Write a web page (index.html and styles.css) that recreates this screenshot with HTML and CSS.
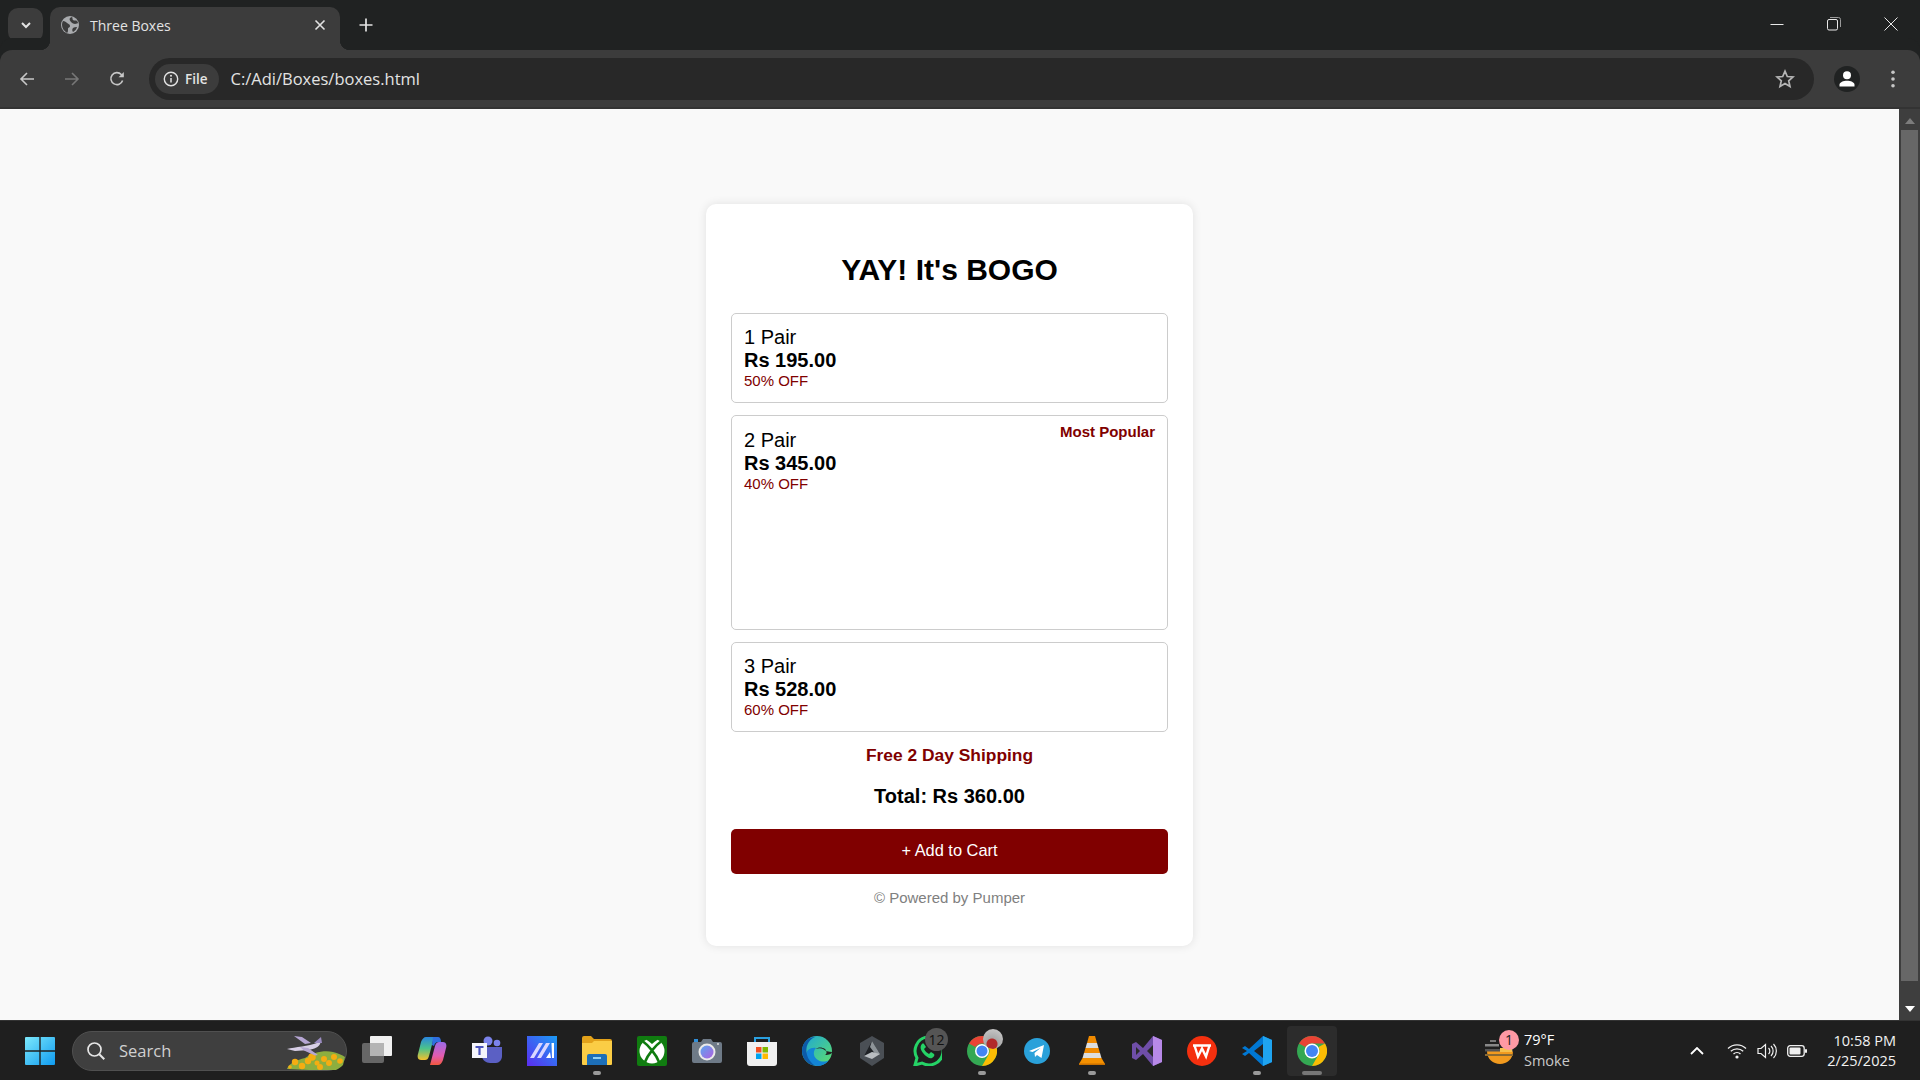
FILE: index.html
```html
<!DOCTYPE html>
<html lang="en">
<head>
<meta charset="utf-8">
<title>Three Boxes</title>
<link rel="stylesheet" href="styles.css">
</head>
<body>
<div class="screen">
  <header class="tabstrip">
    <div class="tab-expander">
      <svg width="14" height="14" viewBox="0 0 14 14"><path d="M3 5l4 4 4-4" fill="none" stroke="#e3e3e3" stroke-width="2"/></svg>
    </div>
    <div class="tab">
      <svg class="tab-favicon" width="18" height="18" viewBox="0 0 18 18"><circle cx="9" cy="9" r="9" fill="#a9abae"/><path d="M2 5c2 0 3 1 4 2s3 1 3 3-2 1-2 3 0 3-1 4C3 15 1 12 1 9c0-1.500.400-3 1-4zM11 1c1 1 0 2 1 3s3 0 4 1 1 2 1 2-2 1-3 1-3-1-4-2-2-3-1-4 2-1 2-1zM12 12c1-1 3-1 4-1-.500 2-2 4-4 5-1-1-1-3 0-4z" fill="#3c3c3c"/></svg>
      <span class="tab-title">Three Boxes</span>
      <svg class="tab-close" width="12" height="12" viewBox="0 0 12 12"><path d="M1.500 1.500l9 9M10.500 1.500l-9 9" stroke="#e3e3e3" stroke-width="1.600"/></svg>
    </div>
    <svg class="new-tab" width="14" height="14" viewBox="0 0 14 14"><path d="M7 0.500v13M0.500 7h13" stroke="#e3e3e3" stroke-width="1.700"/></svg>
    <div class="window-controls">
      <svg width="14" height="14" viewBox="0 0 14 14"><path d="M0.500 7.500h13" stroke="#e8e8e8" stroke-width="1"/></svg>
      <svg width="14" height="14" viewBox="0 0 14 14"><rect x="0.500" y="2.500" width="10" height="10.500" rx="1.500" fill="none" stroke="#e8e8e8"/><path d="M3 .5h8.500a2 2 0 0 1 2 2V10" fill="none" stroke="#9a9a9a"/></svg>
      <svg width="14" height="14" viewBox="0 0 14 14"><path d="M0.500 0.500l13 13M13.500 0.500l-13 13" stroke="#e8e8e8" stroke-width="1"/></svg>
    </div>
  </header>

  <nav class="toolbar">
    <div class="nav-buttons">
      <svg width="16" height="16" viewBox="0 0 16 16"><path d="M15 8H2M8 2L2 8l6 6" fill="none" stroke="#c7c7c7" stroke-width="1.600"/></svg>
      <svg width="16" height="16" viewBox="0 0 16 16"><path d="M1 8h13M8 2l6 6-6 6" fill="none" stroke="#777" stroke-width="1.600"/></svg>
      <svg width="16" height="16" viewBox="0 0 16 16"><path d="M13.600 9.500A6 6 0 1 1 12.300 3.500L14 5" fill="none" stroke="#c7c7c7" stroke-width="1.600"/><path d="M14.800 1v5.200H9.600z" fill="#c7c7c7"/></svg>
    </div>
    <div class="omnibox">
      <div class="chip">
        <svg width="16" height="16" viewBox="0 0 16 16"><circle cx="8" cy="8" r="6.700" fill="none" stroke="#e3e3e3" stroke-width="1.400"/><path d="M8 7v4.500" stroke="#e3e3e3" stroke-width="1.500"/><circle cx="8" cy="4.800" r="1" fill="#e3e3e3"/></svg>
        <span>File</span>
      </div>
      <span class="url">C:/Adi/Boxes/boxes.html</span>
      <svg class="star" width="20" height="20" viewBox="0 0 20 20"><path d="M10 2.200l2.300 5.300 5.700.500-4.300 3.800 1.300 5.700L10 14.500l-5 3 1.300-5.700L2 8l5.700-.500z" fill="none" stroke="#b5b5b5" stroke-width="1.700"/></svg>
    </div>
    <div class="toolbar-end">
      <div class="avatar">
        <svg width="20" height="20" viewBox="0 0 20 20"><circle cx="10" cy="6.200" r="4" fill="#fff"/><path d="M2.500 17.500v-1.800c0-2.500 4-4 7.500-4s7.500 1.500 7.500 4v1.800z" fill="#fff"/></svg>
      </div>
      <svg class="menu" width="4" height="18" viewBox="0 0 4 18"><circle cx="2" cy="2.300" r="1.800" fill="#c7c7c7"/><circle cx="2" cy="9" r="1.800" fill="#c7c7c7"/><circle cx="2" cy="15.700" r="1.800" fill="#c7c7c7"/></svg>
    </div>
  </nav>

  <div class="viewport">
    <main class="page">
      <section class="card">
        <h1 class="card-title">YAY! It's BOGO</h1>
        <div class="option">
          <div class="option-qty">1 Pair</div>
          <div class="option-price">Rs 195.00</div>
          <div class="option-off">50% OFF</div>
        </div>
        <div class="option option-tall">
          <span class="badge">Most Popular</span>
          <div class="option-qty">2 Pair</div>
          <div class="option-price">Rs 345.00</div>
          <div class="option-off">40% OFF</div>
        </div>
        <div class="option">
          <div class="option-qty">3 Pair</div>
          <div class="option-price">Rs 528.00</div>
          <div class="option-off">60% OFF</div>
        </div>
        <p class="shipping">Free 2 Day Shipping</p>
        <p class="total">Total: Rs 360.00</p>
        <button class="add-btn" type="button">+ Add to Cart</button>
        <p class="powered">© Powered by Pumper</p>
      </section>
    </main>
    <div class="scrollbar">
      <svg class="scroll-arrow" width="10" height="6" viewBox="0 0 10 6"><path d="M5 0l5 6H0z" fill="#7c7c7c"/></svg>
      <div class="scroll-thumb"></div>
      <svg class="scroll-arrow" width="10" height="6" viewBox="0 0 10 6"><path d="M0 0h10L5 6z" fill="#fff"/></svg>
    </div>
  </div>

  <footer class="taskbar">
    <div class="task-start">
      <svg width="30" height="30" viewBox="0 0 30 30"><defs><linearGradient id="win" x1="0" y1="0" x2="1" y2="1"><stop offset="0" stop-color="#7ce8fb"/><stop offset="1" stop-color="#0f9bf0"/></linearGradient></defs><path d="M1 1h13.300v13.300H0V2a1 1 0 0 1 1-1zM15.700 1H29a1 1 0 0 1 1 1v12.300H15.700zM0 15.700h14.300V29H1a1 1 0 0 1-1-1zM15.700 15.700H30V28a1 1 0 0 1-1 1H15.700z" fill="url(#win)"/></svg>
    </div>
    <div class="task-search">
      <svg width="20" height="20" viewBox="0 0 20 20"><circle cx="8.500" cy="8.500" r="6.500" fill="none" stroke="#e6e6e6" stroke-width="1.700"/><path d="M13.300 13.300l5 5" stroke="#e6e6e6" stroke-width="2"/></svg>
      <span class="search-label">Search</span>
      <svg class="search-art" width="60" height="34" viewBox="0 0 60 34">
        <path d="M1 33c2-6 10-9 18-11 8-5 18-8 28-6 5 1 9 3 12 5l-2 8c-3 3-7 6-12 6z" fill="#8dae3f"/>
        <g fill="#f5ad12"><circle cx="9" cy="26" r="3.200"/><circle cx="16" cy="30" r="3.200"/><circle cx="22" cy="25" r="3.200"/><circle cx="26" cy="21" r="3.800"/><circle cx="31" cy="27" r="2.500"/><circle cx="38" cy="23" r="3"/><circle cx="34" cy="31" r="3"/><circle cx="43" cy="27" r="3"/><circle cx="48" cy="21" r="3"/><circle cx="54" cy="25" r="2.800"/><circle cx="4" cy="31" r="1.800"/></g>
        <path d="M1 13c8-2 22-3 30-6 3-1 4-1 3 1-1 3-6 5-11 6l-14 1z" fill="#d8cfe6"/>
        <path d="M8 0l8 1 9 6-6 1zM14 11l8 1 10 7-3 .5-11-5z" fill="#b6a6d4"/><path d="M28 7l7-6 1 6z" fill="#9b8cc0"/>
      </svg>
    </div>
    <div class="task-apps">
      <div class="app"><svg width="30" height="30" viewBox="0 0 30 30"><rect y="7" width="22" height="20" rx="2" fill="#666"/><rect x="8" width="22" height="20" rx="1" fill="#f0f0f0"/><rect x="8" y="7" width="14" height="13" fill="#b4b4b4"/></svg></div>
      <div class="app"><svg width="30" height="30" viewBox="0 0 30 30"><defs><linearGradient id="cp1" x1="0" y1="0" x2="0" y2="1"><stop offset="0" stop-color="#2a86e0"/><stop offset=".5" stop-color="#4cc38a"/><stop offset="1" stop-color="#f5c02c"/></linearGradient><linearGradient id="cp2" x1="0" y1="0" x2="0" y2="1"><stop offset="0" stop-color="#9a6be8"/><stop offset=".6" stop-color="#e25bb0"/><stop offset="1" stop-color="#f2583e"/></linearGradient></defs><path d="M9 1h8l-5 19c-1 3-2 4-4 4H4c-3 0-4-3-3-6l3-12c1-3 3-5 5-5z" fill="url(#cp1)"/><path d="M21 29h-8l5-19c1-3 2-4 4-4h4c3 0 4 3 3 6l-3 12c-1 3-3 5-5 5z" fill="url(#cp2)"/><path d="M16 1h5c2 0 3 2 3 5h-3c-2 0-3 1-4 4l-2-1z" fill="#2f6fe0"/></svg></div>
      <div class="app"><svg width="30" height="30" viewBox="0 0 30 30"><circle cx="25" cy="7" r="3.300" fill="#7b83eb"/><circle cx="16" cy="5" r="4.500" fill="#7b83eb"/><path d="M10 11h20v9c0 4-3 7-6 7h-6c-4 0-8-3-8-7z" fill="#5b60c4"/><rect y="7" width="15" height="15" fill="#f5f5fb"/><path d="M3.500 10h8v2H8.600v7H6.400v-7H3.500z" fill="#4b53bc"/></svg></div>
      <div class="app"><svg width="30" height="30" viewBox="0 0 30 30"><defs><linearGradient id="ma" x1="1" y1="0" x2="0" y2="1"><stop offset="0" stop-color="#1a9cf5"/><stop offset="1" stop-color="#5b2cf0"/></linearGradient></defs><rect width="30" height="30" fill="url(#ma)"/><path d="M3 22L12 7h4L7 22zM10 22L19 7h4l-9 15z" fill="#d9d6ff"/><path d="M19 22l4-6 1 6zM24.500 7H27v15h-2z" fill="#fff"/></svg></div>
      <div class="app dotted"><svg width="30" height="30" viewBox="0 0 30 30"><path d="M0 2a2 2 0 0 1 2-2h7l3 3h16a2 2 0 0 1 2 2v4H0z" fill="#e3a21a"/><path d="M0 7l10 0 2-2h18v23a1 1 0 0 1-1 1H1a1 1 0 0 1-1-1z" fill="#fbcd45"/><path d="M5 20a2 2 0 0 1 2-2h16a2 2 0 0 1 2 2v9H5z" fill="#1d6fb8"/><rect x="11" y="21" width="8" height="2" fill="#8fd0f5"/></svg></div>
      <div class="app"><svg width="30" height="30" viewBox="0 0 30 30"><rect width="30" height="30" rx="2" fill="#107c10"/><circle cx="15" cy="15" r="12.500" fill="#fff"/><path d="M6 5.500C11 9 19 18 22 26M24 5.500C19 9 11 18 8 26" fill="none" stroke="#107c10" stroke-width="2.600"/><path d="M9 3.600c2 1 4 2.500 6 4.500 2-2 4-3.500 6-4.500l-2-2h-8z" fill="#107c10"/></svg></div>
      <div class="app"><svg width="30" height="30" viewBox="0 0 30 30"><path d="M2 6h7l2-3h8l2 3h7a2 2 0 0 1 2 2v17a2 2 0 0 1-2 2H2a2 2 0 0 1-2-2V8a2 2 0 0 1 2-2z" fill="#6e7a87"/><rect x="2" y="3" width="4" height="3" fill="#2f8ed8"/><circle cx="15" cy="16" r="8.500" fill="#eaeaea"/><defs><linearGradient id="cam" x1="0" y1="0" x2="1" y2="1"><stop offset="0" stop-color="#5aa7ef"/><stop offset="1" stop-color="#b05fe0"/></linearGradient></defs><circle cx="15" cy="16" r="6.500" fill="url(#cam)"/><circle cx="26" cy="8" r="1" fill="#ddd"/></svg></div>
      <div class="app"><svg width="30" height="30" viewBox="0 0 30 30"><path d="M8 6V2h14v4" fill="none" stroke="#2aa0e0" stroke-width="2"/><path d="M0 6h30v21a3 3 0 0 1-3 3H3a3 3 0 0 1-3-3z" fill="#f0f0f0"/><rect x="9" y="11" width="5.500" height="5.500" fill="#f25022"/><rect x="15.500" y="11" width="5.500" height="5.500" fill="#7fba00"/><rect x="9" y="17.500" width="5.500" height="5.500" fill="#00a4ef"/><rect x="15.500" y="17.500" width="5.500" height="5.500" fill="#ffb900"/></svg></div>
      <div class="app"><svg width="30" height="30" viewBox="0 0 30 30"><defs><linearGradient id="edge" x1="0" y1="0" x2="1" y2="1"><stop offset="0" stop-color="#1ca5d8"/><stop offset="1" stop-color="#5fe06a"/></linearGradient></defs><circle cx="15" cy="15" r="15" fill="url(#edge)"/><path d="M14 12c-5-1-10 2-10 7 0 5 5 10 11 11 5 0 9-2 12-6-3 2-8 2-11 0-4-2-6-8-2-12z" fill="#1384d6"/><path d="M0 15C0 7 6 1 13 1 6 4 3 11 5 19c1 4 4 8 8 10.800C6 29 0 23 0 15z" fill="#0d5aa8"/><path d="M14 13c2-2 6-2 9 0 2 2 2 5 0 6 4 0 7-1 7-3-3 0-7-1-9-3-2-1-5-1-7 0z" fill="#232323"/></svg></div>
      <div class="app"><svg width="30" height="30" viewBox="0 0 30 30"><path d="M15 0l12 7v15l-12 8-12-8V7z" fill="#4a4f55"/><path d="M15 5l8 13-8-2-8 4z" fill="#1f2226"/><path d="M15 5l8 13-4 1-6-8z" fill="#8e9499"/><path d="M7 20l8-4 8 2-8 5z" fill="#b9bdc1"/></svg></div>
      <div class="app"><svg width="30" height="30" viewBox="0 0 30 30"><path d="M3 29l2-7A14 14 0 1 1 10 27z" fill="none" stroke="#25d366" stroke-width="3"/><path d="M10 8c-2 2-2 5 1 9s7 6 9 5 3-3 2-4l-3-2-2 2c-2-1-4-3-5-5l2-2-2-3c-1-1-1-1-2 0z" fill="#25d366"/></svg><span class="app-badge">12</span></div>
      <div class="app dotted"><svg width="30" height="30" viewBox="0 0 30 30"><circle cx="15" cy="15" r="15" fill="#34a853"/><path d="M15 0a15 15 0 0 1 13 7.500H15A7.500 7.500 0 0 0 8.500 11L2 7.500A15 15 0 0 1 15 0z" fill="#ea4335"/><path d="M28 7.500A15 15 0 0 1 15 30l6.500-11.300A7.500 7.500 0 0 0 21.500 11z" fill="#fbbc04"/><circle cx="15" cy="15" r="7" fill="#fff"/><circle cx="15" cy="15" r="5.500" fill="#4285f4"/></svg><span class="app-photo"></span></div>
      <div class="app"><svg width="26" height="26" viewBox="0 0 26 26"><circle cx="13" cy="13" r="13" fill="#2aa1da"/><path d="M5 13l15-6-2.500 13-4.500-3-2 2-.500-4 6-5-8 4z" fill="#fff"/></svg></div>
      <div class="app dotted"><svg width="26" height="30" viewBox="0 0 26 30"><path d="M10 0h6l2 7H8z" fill="#f08a00"/><path d="M8 7h10l1.500 5h-13z" fill="#ddd"/><path d="M6.500 12h13l1.500 5H5z" fill="#f08a00"/><path d="M5 17h16l1.500 5h-19z" fill="#ddd"/><path d="M3.500 22h19l3.500 6H0z" fill="#f49000"/><rect y="27.500" width="26" height="1.500" fill="#c86f00"/></svg></div>
      <div class="app"><svg width="30" height="30" viewBox="0 0 30 30"><path d="M0 8l4-2 7 6L21 0l9 4v22l-9 4-10-12-7 6-4-2z" fill="#6f4ea8"/><path d="M21 0l9 4v22l-9 4z" fill="#b889e8"/><path d="M4 11v8l4-4z" fill="#2a2a2a"/><path d="M21 9v12l-6-6z" fill="#2a2a2a"/></svg></div>
      <div class="app"><svg width="30" height="30" viewBox="0 0 30 30"><circle cx="15" cy="15" r="15" fill="#f4300f"/><path d="M6 9.500h18M7.500 9.500l3.500 11 4-8 4 8 3.500-11" fill="none" stroke="#fff" stroke-width="2.400"/></svg></div>
      <div class="app dotted"><svg width="30" height="30" viewBox="0 0 30 30"><path d="M21 0l9 4v22l-9 4L7 17l-4 3-3-2 5-3-5-3 3-2 4 3z" fill="#0078d4"/><path d="M21 0l9 4v22l-9 4z" fill="#1fa4f0"/><path d="M21 8v14l-9-7z" fill="#232323"/></svg></div>
      <div class="app app-active"><svg width="30" height="30" viewBox="0 0 30 30"><circle cx="15" cy="15" r="15" fill="#34a853"/><path d="M15 0a15 15 0 0 1 13 7.500H15A7.500 7.500 0 0 0 8.500 11L2 7.500A15 15 0 0 1 15 0z" fill="#ea4335"/><path d="M28 7.500A15 15 0 0 1 15 30l6.500-11.300A7.500 7.500 0 0 0 21.500 11z" fill="#fbbc04"/><circle cx="15" cy="15" r="7.500" fill="#fff"/><circle cx="15" cy="15" r="6" fill="#4285f4"/></svg></div>
    </div>
    <div class="tray">
      <div class="weather">
        <svg width="30" height="30" viewBox="0 0 30 30"><path d="M2 15h26c0 8-6 13-13 13S2 23 2 15z" fill="#f29a1e"/><rect x="5" y="4" width="6" height="2" fill="#777"/><rect x="0" y="8" width="14" height="2.500" fill="#888"/><rect x="0" y="13" width="28" height="2.500" fill="#555"/><rect x="15" y="12" width="12" height="4" fill="#f6c04c"/><rect x="0" y="18" width="28" height="2" fill="#8a6a33"/></svg>
        <span class="weather-badge">1</span>
        <div class="weather-text">
          <span class="weather-temp">79°F</span>
          <span class="weather-desc">Smoke</span>
        </div>
      </div>
      <svg class="tray-chevron" width="14" height="8" viewBox="0 0 14 8"><path d="M1 7l6-6 6 6" fill="none" stroke="#fff" stroke-width="1.800"/></svg>
      <div class="tray-icons">
        <svg width="20" height="16" viewBox="0 0 20 16"><path d="M1 5.500a13 13 0 0 1 18 0M3.800 8.300a9 9 0 0 1 12.400 0M6.500 11a5 5 0 0 1 7 0" fill="none" stroke="#f0f0f0" stroke-width="1.300"/><circle cx="10" cy="14" r="1.600" fill="#f0f0f0"/></svg>
        <svg width="20" height="16" viewBox="0 0 20 16"><path d="M1 5.500h3L8.500 1.500v13L4 10.500H1z" fill="none" stroke="#f0f0f0" stroke-width="1.200"/><path d="M11.500 5a4 4 0 0 1 0 6M14 3a7 7 0 0 1 0 10M16.500 1a10 10 0 0 1 0 14" fill="none" stroke="#f0f0f0" stroke-width="1.200"/></svg>
        <svg width="20" height="12" viewBox="0 0 20 12"><rect x="0.700" y="0.700" width="16.500" height="10.600" rx="2.500" fill="none" stroke="#f0f0f0" stroke-width="1.300"/><rect x="2.500" y="2.500" width="11" height="7" rx="1" fill="#f0f0f0"/><rect x="18" y="4" width="2" height="4" rx="1" fill="#f0f0f0"/></svg>
      </div>
      <div class="clock">
        <span>10:58 PM</span>
        <span>2/25/2025</span>
      </div>
    </div>
  </footer>
</div>
</body>
</html>
```

FILE: styles.css
```css
* { box-sizing: border-box; }

html, body { margin: 0; height: 100%; overflow: hidden; }

body { font-family: "Liberation Sans", Arial, sans-serif; background: #1f1f1f; }

.screen { display: flex; flex-direction: column; width: 1920px; height: 1080px; }

/* tab strip */
.tabstrip {
  display: flex;
  align-items: flex-end;
  height: 50px;
  padding-left: 8px;
  background: #202222;
  flex: none;
}

.tab-expander {
  display: flex;
  align-items: center;
  justify-content: center;
  align-self: flex-start;
  width: 35px;
  height: 34px;
  margin-top: 8px;
  border-radius: 10px;
  background: #3c3c3c;
}

.tab {
  position: relative;
  display: flex;
  align-items: center;
  width: 290px;
  height: 43px;
  margin-left: 7px;
  padding: 0 11px 7px 11px;
  border-radius: 10px 10px 0 0;
  background: #3c3c3c;
}

.tab::before, .tab::after {
  content: "";
  position: absolute;
  bottom: 0;
  width: 10px;
  height: 10px;
}

.tab::before { left: -10px; background: radial-gradient(circle at 0 0, #202222 10px, #3c3c3c 10.500px); }
.tab::after { right: -10px; background: radial-gradient(circle at 100% 0, #202222 10px, #3c3c3c 10.500px); }

.tab-title {
  margin-left: 11px;
  font: 400 14px "Open Sans", sans-serif;
  color: #e3e3e3;
  flex: 1;
}

.tab-close { margin-right: 3px; }

.new-tab { align-self: flex-start; margin: 18px 0 0 19px; }

.window-controls {
  display: flex;
  align-self: flex-start;
  gap: 43px;
  margin: 17px 22px 0 auto;
}

/* toolbar */
.toolbar {
  display: flex;
  align-items: center;
  flex: none;
  height: 59px;
  padding: 0 0 0 19px;
  background: #3c3c3c;
  border-radius: 12px 12px 0 0;
  border-bottom: 2px solid #333;
  box-shadow: 0 -12px 0 #202222;
}

.nav-buttons { display: flex; gap: 29px; }

.omnibox {
  display: flex;
  align-items: center;
  width: 1665px;
  height: 42px;
  margin-left: 24px;
  padding: 0 19px 0 6px;
  border-radius: 21px;
  background: #282828;
}

.chip {
  display: flex;
  align-items: center;
  gap: 6px;
  height: 30px;
  padding: 0 11px 0 8px;
  border-radius: 15px;
  background: #3c3c3c;
  font: 600 13.500px "Open Sans", sans-serif;
  color: #e3e3e3;
}

.url {
  margin-left: 12px;
  font: 400 16.500px "Open Sans", sans-serif;
  color: #e3e3e3;
  flex: 1;
}

.toolbar-end { display: flex; align-items: center; }

.avatar {
  display: flex;
  align-items: center;
  justify-content: center;
  width: 26px;
  height: 26px;
  margin-left: 20px;
  border-radius: 50%;
  background: #202222;
}

.menu { margin-left: 31px; }

/* page */
.viewport { display: flex; flex: 1; min-height: 0; }

.page {
  flex: 1;
  padding-top: 95px;
  background: #f9f9f9;
  overflow: hidden;
}

.card {
  display: flex;
  flex-direction: column;
  width: 487px;
  height: 742px;
  margin: 0 auto;
  padding: 0 25px;
  border-radius: 10px;
  background: #fff;
  box-shadow: 0 0 10px rgba(0, 0, 0, 0.1);
}

.card-title {
  margin: 49px 0 26px;
  font-size: 30px;
  line-height: 34px;
  font-weight: 700;
  text-align: center;
  color: #000;
}

.option {
  position: relative;
  height: 90px;
  margin-bottom: 12px;
  padding: 12px 12px 0;
  border: 1px solid #ccc;
  border-radius: 5px;
}

.option-tall { height: 215px; padding-top: 13px; }

.option-qty { font-size: 20px; line-height: 23px; color: #000; }

.option-price { font-size: 20px; line-height: 23px; font-weight: 700; color: #000; }

.option-off { font-size: 15px; line-height: 17px; color: #800000; }

.badge {
  position: absolute;
  top: 7px;
  right: 12px;
  font-size: 15px;
  line-height: 17px;
  font-weight: 700;
  color: #800000;
}

.shipping {
  margin: 1px 0 0;
  font-size: 17.400px;
  line-height: 21px;
  font-weight: 700;
  text-align: center;
  color: #800000;
}

.total {
  margin: 19px 0 21px;
  font-size: 20px;
  line-height: 23px;
  font-weight: 700;
  text-align: center;
  color: #000;
}

.add-btn {
  height: 45px;
  padding: 0 0 3px;
  border: 0;
  border-radius: 5px;
  background: #800000;
  color: #fff;
  font: 400 16.400px "Liberation Sans", Arial, sans-serif;
}

.powered {
  margin: 15px 0 0;
  font-size: 15px;
  line-height: 18px;
  text-align: center;
  color: #808080;
}

.scrollbar {
  display: flex;
  flex-direction: column;
  align-items: center;
  width: 21px;
  padding-top: 9px;
  background: #3e3e3e;
}

.scroll-thumb {
  width: 17px;
  height: 851px;
  margin: 6px 0 25px;
  background: #676767;
}

/* taskbar */
.taskbar {
  display: flex;
  align-items: center;
  flex: none;
  height: 60px;
  padding-left: 25px;
  background: #1f1f1f;
  border-top: 1px solid #333;
}

.task-start { display: flex; align-items: center; width: 47px; }

.task-search {
  display: flex;
  align-items: center;
  width: 275px;
  height: 40px;
  padding: 0 0 0 13px;
  border-radius: 20px;
  background: #3f3f3f;
  border: 1px solid #505050;
}

.search-label {
  margin-left: 13px;
  font: 400 16.500px "Open Sans", sans-serif;
  color: #d0d0d0;
  flex: 1;
}

.search-art { margin-top: 4px; }

.task-apps { display: flex; margin-left: 2px; }

.app {
  position: relative;
  display: flex;
  align-items: center;
  justify-content: center;
  width: 55px;
  height: 50px;
}

.dotted::after {
  content: "";
  position: absolute;
  bottom: 1px;
  left: 50%;
  width: 8px;
  height: 4px;
  margin-left: -4px;
  border-radius: 2px;
  background: #9a9a9a;
}

.app-active {
  width: 50px;
  margin: 0 2.500px;
  border-radius: 4px;
  background: #2c2c2c;
}

.app-active::after {
  content: "";
  position: absolute;
  bottom: 1px;
  left: 50%;
  width: 20px;
  height: 4px;
  margin-left: -10px;
  border-radius: 2px;
  background: #777;
}

.app-badge {
  position: absolute;
  top: 2px;
  right: 6px;
  width: 23px;
  height: 23px;
  border-radius: 50%;
  background: #555;
  font: 400 14px/23px "Open Sans", sans-serif;
  text-align: center;
  color: #111;
}

.app-photo {
  position: absolute;
  top: 3px;
  right: 6px;
  width: 20px;
  height: 20px;
  border-radius: 50%;
  background: radial-gradient(circle at 45% 75%, #b22a2a 0 5px, #a9a9a9 6px, #d0cfcf 100%);
}

.tray { display: flex; align-items: center; margin-left: 146px; }

.weather { position: relative; display: flex; align-items: center; }

.weather-badge {
  position: absolute;
  top: 0;
  left: 14px;
  width: 20px;
  height: 20px;
  border-radius: 50%;
  background: #ff99a4;
  font: 400 14px/20px "Open Sans", sans-serif;
  text-align: center;
  color: #222;
}

.weather-text { display: flex; flex-direction: column; margin-left: 9px; width: 130px; }

.weather-temp { font: 400 14.500px/20px "Open Sans", sans-serif; color: #fff; }

.weather-desc { font: 400 14.500px/21px "Open Sans", sans-serif; color: #c8c8c8; }

.tray-chevron { margin-left: 36px; }

.tray-icons { display: flex; align-items: center; gap: 10px; margin-left: 23px; }

.clock {
  display: flex;
  flex-direction: column;
  align-items: flex-end;
  width: 84px;
  margin-left: 5px;
  font: 400 14.500px/20px "Open Sans", sans-serif;
  color: #f2f2f2;
}
```
